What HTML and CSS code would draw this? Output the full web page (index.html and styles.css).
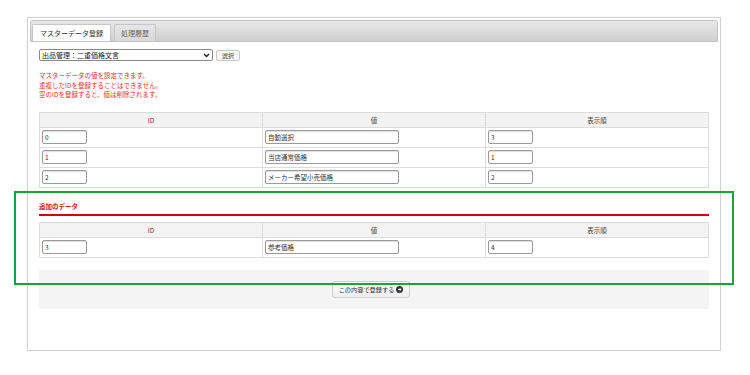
FILE: index.html
```html
<!DOCTYPE html>
<html lang="ja">
<head>
  <meta charset="UTF-8" />
  <meta name="viewport" content="width=device-width, initial-scale=1.0"/>
  <title>マスターデータ登録</title>
  <link rel="stylesheet" href="styles.css">
</head>
<body>
  <div class="panel">
    <!-- タブ -->
    <div class="tabs">
      <div class="tab active">マスターデータ登録</div>
      <div class="tab">処理履歴</div>
    </div>

    <div class="content">
      <div class="select-row">
        <div class="select-wrap">
          <select class="master-select">
            <option>出品管理：二重価格文言</option>
          </select>
          <svg class="chevron" width="7" height="5" viewBox="0 0 7 5"><path d="M1 1 L3.5 3.5 L6 1" fill="none" stroke="#222" stroke-width="1.4"/></svg>
        </div>
        <button class="btn-small">選択</button>
      </div>

      <p class="notice">マスターデータの値を設定できます。<br>重複したIDを登録することはできません。<br>空のIDを登録すると、値は削除されます。</p>

      <table class="data-table">
        <tr><th>ID</th><th>値</th><th>表示順</th></tr>
        <tr><td><input class="field" value="0"></td><td><input class="field wide" value="自動選択"></td><td><input class="field" value="3"></td></tr>
        <tr><td><input class="field" value="1"></td><td><input class="field wide" value="当店通常価格"></td><td><input class="field" value="1"></td></tr>
        <tr><td><input class="field" value="2"></td><td><input class="field wide" value="メーカー希望小売価格"></td><td><input class="field" value="2"></td></tr>
      </table>

      <h3 class="add-title">追加のデータ</h3>
      <table class="data-table">
        <tr><th>ID</th><th>値</th><th>表示順</th></tr>
        <tr><td><input class="field" value="3"></td><td><input class="field wide" value="参考価格"></td><td><input class="field" value="4"></td></tr>
      </table>

      <div class="submit-area">
        <button class="btn-submit">この内容で登録する <span class="arrow"><svg width="7" height="7" viewBox="0 0 7 7"><circle cx="3.5" cy="3.5" r="3.5" fill="#333"/><path d="M2 3.5 H5 M3.6 2.1 L5 3.5 L3.6 4.9" fill="none" stroke="#fff" stroke-width="1"/></svg></span></button>
      </div>
    </div>
  </div>

  <!-- 注釈の枠 -->
  <div class="highlight"></div>
</body>
</html>
```

FILE: styles.css
```css
body {
  margin: 0;
  padding: 0;
  background: #fff;
  color: #333;
  font-family: "Noto Sans CJK JP", "Noto Sans", sans-serif;
}

.panel {
  margin: 17px 0 0 27px;
  width: 688px;
  height: 328px;
  padding: 2px;
  border: 1px solid #d2d2d2;
  box-shadow: 0 0 1px #e6e6e6;
}

/* タブ */
.tabs {
  display: flex;
  gap: 3px;
  height: 17px;
  padding: 3px 0 0 1px;
  border: 1px solid #c4c4c4;
  border-radius: 3px 3px 0 0;
  background: linear-gradient(#e9e9e9, #cfcfcf);
}

.tab {
  height: 17px;
  padding: 0 6px;
  font-size: 7px;
  line-height: 17px;
  color: #666;
  border: 1px solid #c6c6c6;
  border-bottom: none;
  border-radius: 2px 2px 0 0;
  background: linear-gradient(#e6e6e6, #d8d8d8);
  box-sizing: border-box;
}

.tab.active {
  padding: 0 7px;
  color: #333;
  background: #fff;
}

.content {
  padding: 7px 9px 0 9px;
}

.select-row {
  display: flex;
  align-items: center;
  gap: 3px;
}

.select-wrap {
  position: relative;
}

.master-select {
  appearance: none;
  display: block;
  width: 174px;
  height: 12px;
  padding: 0 0 0 2px;
  font-family: inherit;
  font-size: 7px;
  line-height: 10px;
  color: #222;
  background: #fff;
  border: 1px solid #888;
  border-radius: 2px;
}

.chevron {
  position: absolute;
  right: 3px;
  top: 4px;
}

.btn-small {
  height: 11px;
  padding: 0 5px;
  font-family: inherit;
  font-size: 6px;
  line-height: 9px;
  color: #444;
  background: #f6f6f6;
  border: 1px solid #c8c8c8;
  border-radius: 2px;
}

.notice {
  margin: 10px 0 0 0;
  font-size: 6.5px;
  line-height: 9.5px;
  color: #f0302a;
}

.data-table {
  width: 100%;
  margin-top: 12px;
  border-collapse: collapse;
  table-layout: fixed;
}

.data-table th {
  height: 14px;
  padding: 0;
  font-size: 6.5px;
  font-weight: normal;
  color: #444;
  background: #f3f3f3;
  border: 1px solid #dcdcdc;
}

.data-table td {
  height: 19px;
  padding: 0 0 0 2px;
  border: 1px solid #dcdcdc;
}

.field {
  display: block;
  width: 45px;
  height: 14px;
  padding: 0 2px;
  box-sizing: border-box;
  font-family: inherit;
  font-size: 6.5px;
  color: #333;
  border: 1px solid #9a9a9a;
  border-radius: 2px;
  box-shadow: inset 0 1px 1px #ddd;
}

.field.wide {
  width: 134px;
}

.add-title {
  margin: 14px 0 0 0;
  padding-bottom: 3px;
  font-size: 6.5px;
  font-weight: bold;
  line-height: 9px;
  color: #d42020;
  border-bottom: 2px solid #d40000;
}

.add-title + .data-table {
  margin-top: 6px;
}

.submit-area {
  display: flex;
  justify-content: center;
  align-items: center;
  height: 39px;
  margin-top: 12px;
  padding-right: 6px;
  background: #f4f4f4;
}

.btn-submit {
  display: flex;
  align-items: center;
  gap: 2px;
  height: 17px;
  padding: 0 6px;
  font-family: inherit;
  font-size: 6.2px;
  color: #333;
  background: linear-gradient(#fcfcfc, #efefef);
  border: 1px solid #cfcfcf;
  border-radius: 3px;
}

.arrow {
  display: flex;
}

.highlight {
  position: absolute;
  left: 14px;
  top: 191px;
  width: 716px;
  height: 90px;
  border: 2px solid #1aa33c;
  pointer-events: none;
}
```
